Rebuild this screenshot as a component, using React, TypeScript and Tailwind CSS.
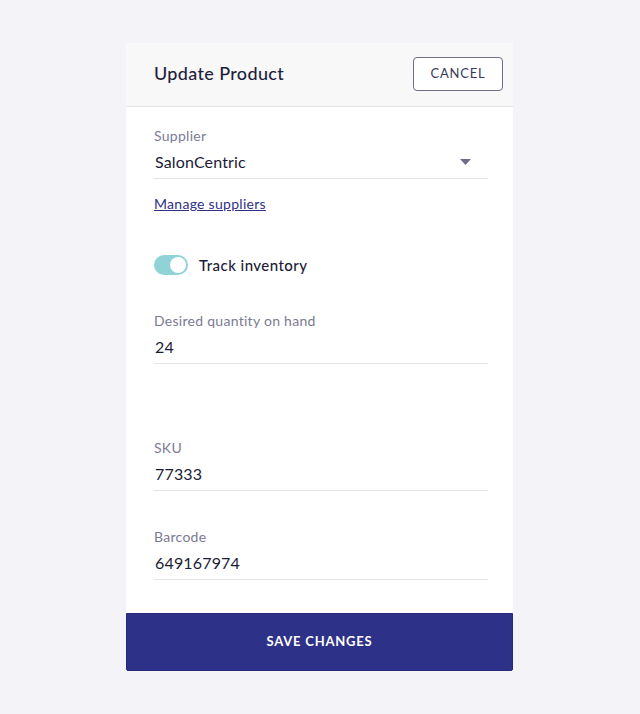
type FieldProps = {
  label: string;
  value: string;
  className?: string;
  select?: boolean;
};

function Field({ label, value, className, select }: FieldProps) {
  return (
    <div className={className}>
      <div className="text-[14px] leading-[18px] tracking-[0.02em] text-[#7b7b93]">{label}</div>
      <div className="mt-[6px] flex items-center justify-between border-b border-[#e4e4ea] pb-[5px]">
        <span className="pl-px text-[16px] leading-[22px] tracking-[0.01em] text-[#1b1b36]">
          {value}
        </span>
        {select ? (
          <svg width="11" height="6" viewBox="0 0 11 6" className="mr-[17px]">
            <path d="M0 0h11L5.5 6z" fill="#6e6e88" />
          </svg>
        ) : null}
      </div>
    </div>
  );
}

export default function App() {
  return (
    <div
      className="min-h-[714px] w-full bg-[#f3f3f8] pt-[43px]"
      style={{ fontFamily: "Lato, 'Noto Sans', sans-serif" }}
    >
      <div className="ml-[126px] w-[387px] bg-white">
        <div className="flex h-[64px] items-center justify-between border-b border-[#e3e3e8] bg-[#f8f8f9] pb-[2px] pl-[28px] pr-[10px]">
          <h1 className="text-[18px] font-medium tracking-[0.02em] text-[#1f1f3d]">
            Update Product
          </h1>
          <button className="h-[34px] w-[90px] rounded-[4px] border border-[#6e6e88] bg-white text-[13px] tracking-[0.06em] text-[#3a3a58]">
            CANCEL
          </button>
        </div>

        <div className="pl-[28px] pr-[25px] pt-[20px]">
          <Field label="Supplier" value="SalonCentric" select />

          <a
            href="#"
            className="mt-[16px] block text-[14px] leading-[18px] tracking-[0.02em] text-[#2e3187] underline"
          >
            Manage suppliers
          </a>

          <div className="mt-[42px] flex items-center gap-[11px]">
            <div className="flex h-[20px] w-[34px] items-center justify-end rounded-full bg-[#8fd3d6] pr-[2px]">
              <div className="h-[16px] w-[16px] rounded-full bg-white" />
            </div>
            <span className="text-[15px] font-medium leading-[20px] tracking-[0.03em] text-[#1b1b36]">
              Track inventory
            </span>
          </div>

          <Field className="mt-[37px]" label="Desired quantity on hand" value="24" />
          <Field className="mt-[75px]" label="SKU" value="77333" />
          <Field className="mt-[37px]" label="Barcode" value="649167974" />
        </div>

        <button className="mt-[33px] flex h-[58px] w-full items-center justify-center rounded-b-[2px] border border-[#262a78] bg-[#2e3188] text-[13px] font-bold tracking-[0.06em] text-white">
          SAVE CHANGES
        </button>
      </div>
    </div>
  );
}
